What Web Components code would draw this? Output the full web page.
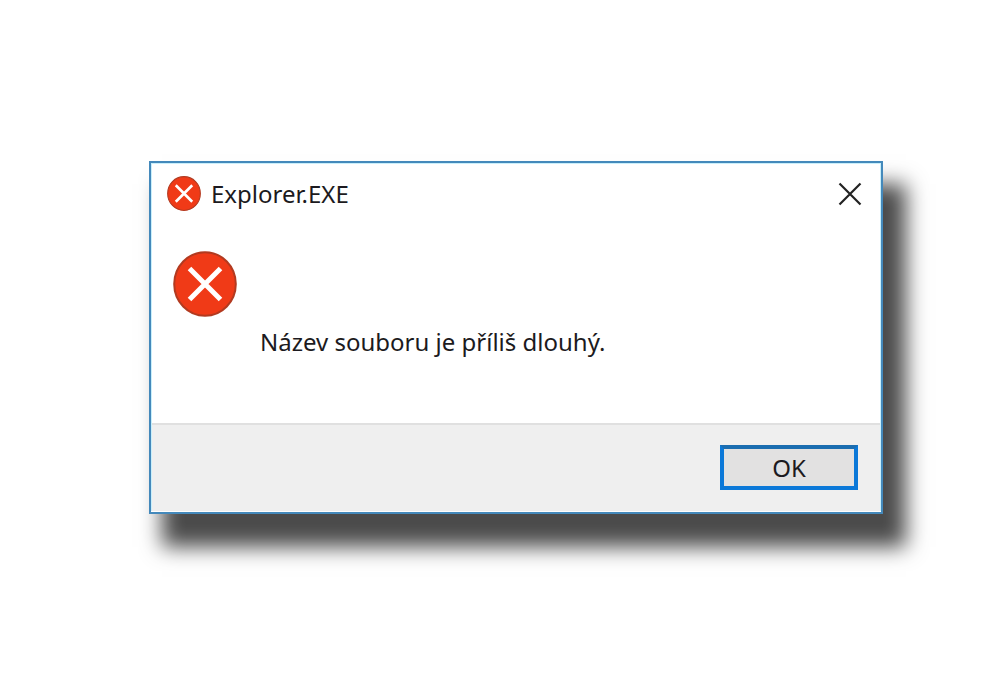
<!DOCTYPE html>
<html lang="cs">
<head>
<meta charset="utf-8">
<title>Explorer.EXE</title>
<style>
  body {
    margin: 0;
    min-height: 100vh;
    box-sizing: border-box;
    padding: 32px 117px 32px 149px;
    display: flex;
    align-items: center;
    background: #fff;
    color: #1c1a20;
    font: 24px/32px "Noto Sans", "Open Sans", sans-serif;
  }
</style>
</head>
<body>
<message-dialog heading="Explorer.EXE">
  <error-icon slot="title-icon" style="--size: 34px"></error-icon>
  <error-icon slot="icon" style="--size: 64px"></error-icon>
  <span>Název souboru je příliš dlouhý.</span>
  <dialog-button slot="actions">OK</dialog-button>
</message-dialog>

<script>
class ErrorIcon extends HTMLElement {
  constructor() {
    super();
    this.attachShadow({ mode: "open" }).innerHTML = `
      <style>
        :host { display: block; flex: none; width: var(--size, 32px); }
        svg { display: block; width: 100%; }
      </style>
      <svg viewBox="0 0 64 66" aria-hidden="true">
        <ellipse cx="32" cy="33" rx="30.8" ry="31.8" fill="#f03a17" stroke="#b23a20" stroke-width="2"/>
        <path d="M16.500 17.500L47.500 48.500M47.500 17.500L16.500 48.500" stroke="#fff" stroke-width="5" fill="none"/>
      </svg>`;
  }
}
customElements.define("error-icon", ErrorIcon);

class DialogButton extends HTMLElement {
  constructor() {
    super();
    this.attachShadow({ mode: "open" }).innerHTML = `
      <style>
        :host { display: block; }
        button {
          display: block;
          box-sizing: border-box;
          min-width: 138px;
          height: 45px;
          padding: 0 16px;
          border: 4px solid #0b78d8;
          border-top-color: #1b6db0;
          background: #e2e1e1;
          color: inherit;
          font: inherit;
        }
      </style>
      <button type="button"><slot></slot></button>`;
  }
}
customElements.define("dialog-button", DialogButton);

class MessageDialog extends HTMLElement {
  constructor() {
    super();
    this.attachShadow({ mode: "open" }).innerHTML = `
      <style>
        :host {
          display: block;
          flex: 1;
          border: 2px solid #4489bb;
          background: #fff;
          box-shadow: 18px 28px 20px 5px #4b4b4b;
        }
        section { box-shadow: inset 0 0 0 1px #c9effb; }
        header {
          display: flex;
          align-items: center;
          gap: 10px;
          padding: 13px 19px 12px 16px;
        }
        h1 { flex: 1; margin: 0; font: inherit; }
        .close {
          display: block;
          padding: 0;
          border: 0;
          background: none;
          color: #222;
        }
        .close svg { display: block; }
        .body {
          display: flex;
          align-items: flex-start;
          gap: 23px;
          padding: 28px 22px 65px;
        }
        p { margin: 75px 0 0; }
        footer {
          display: flex;
          justify-content: flex-end;
          margin: 0 1px 1px;
          padding: 20px 22px 21px;
          border-top: 2px solid #e0e0e0;
          background: #efefef;
        }
      </style>
      <section role="dialog" aria-labelledby="heading" aria-describedby="message">
        <header>
          <slot name="title-icon"></slot>
          <h1 id="heading"></h1>
          <button class="close" type="button" aria-label="Zavřít">
            <svg width="24" height="24" viewBox="0 0 24 24" aria-hidden="true">
              <path d="M1.500 1.500L22.500 22.500M22.500 1.500L1.500 22.500" stroke="currentColor" stroke-width="2.200" fill="none"/>
            </svg>
          </button>
        </header>
        <div class="body">
          <slot name="icon"></slot>
          <p id="message"><slot></slot></p>
        </div>
        <footer><slot name="actions"></slot></footer>
      </section>`;
  }
  connectedCallback() {
    this.shadowRoot.getElementById("heading").textContent = this.getAttribute("heading");
  }
}
customElements.define("message-dialog", MessageDialog);
</script>
</body>
</html>
